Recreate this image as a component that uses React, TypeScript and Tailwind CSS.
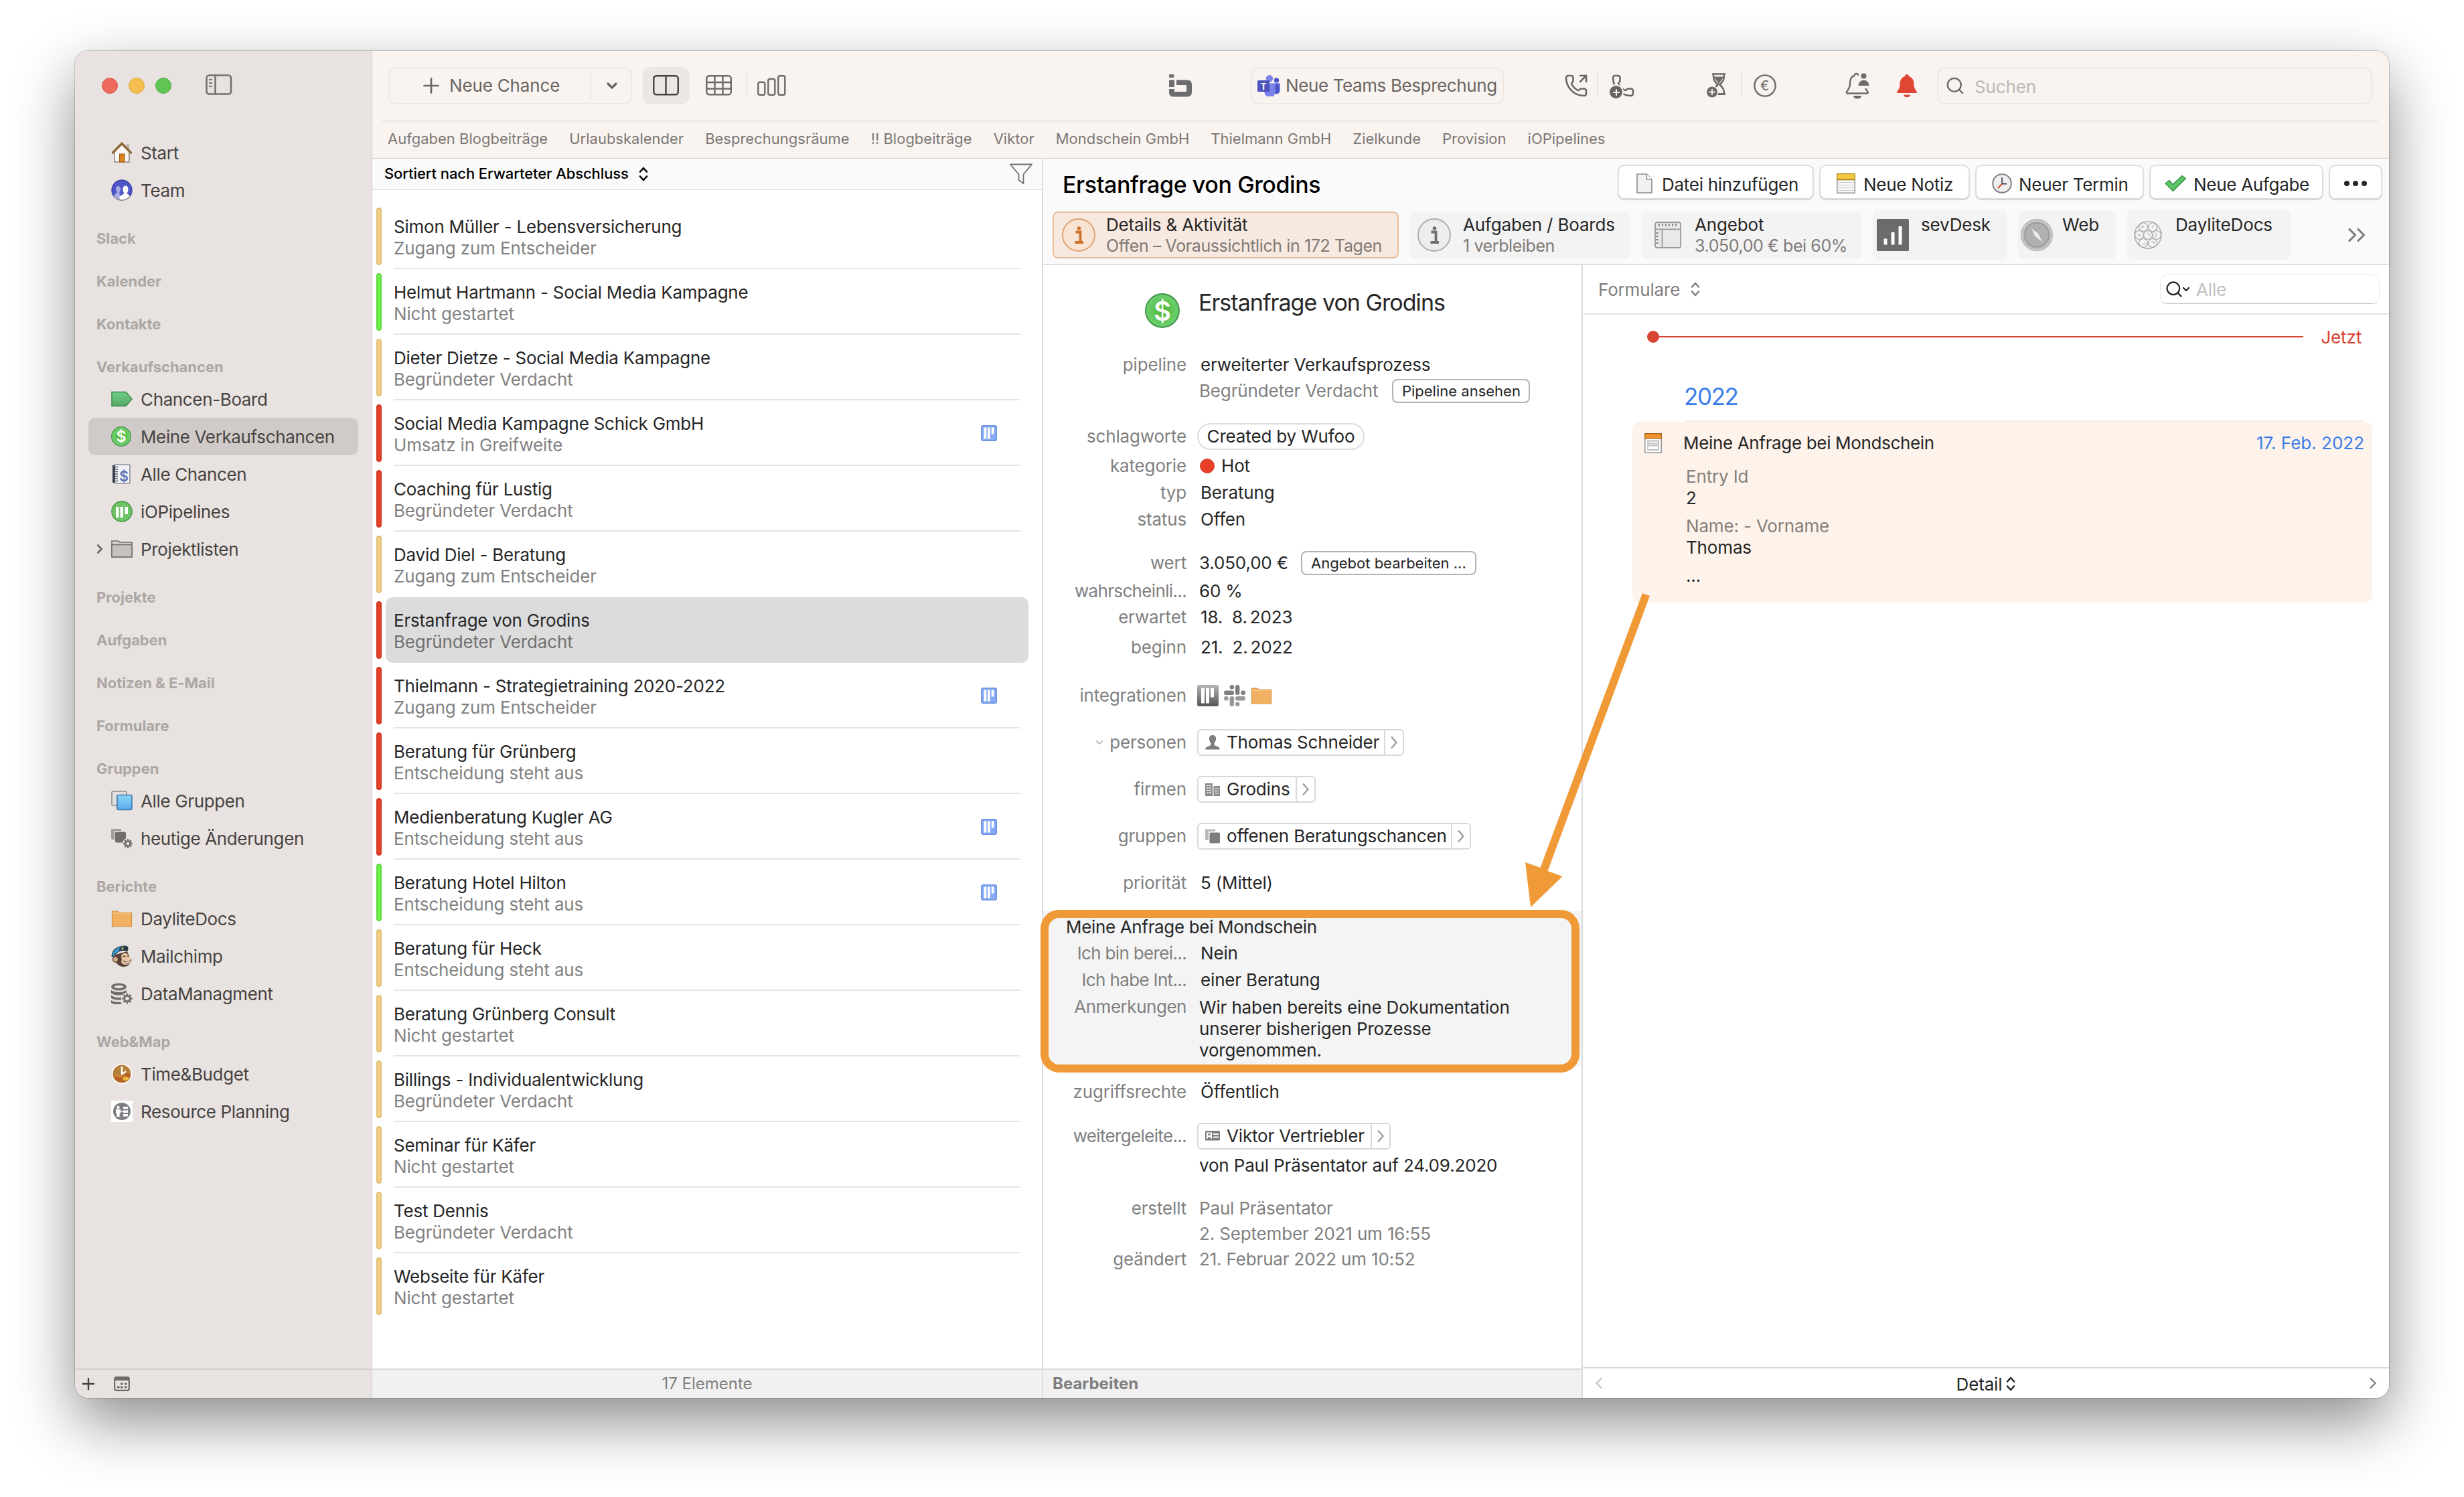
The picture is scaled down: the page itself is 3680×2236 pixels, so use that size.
import type { ReactNode } from "react";
import { ChevronDown, ChevronLeft, ChevronRight, Phone, PhoneOutgoing, Plus, Search } from "lucide-react";
import clsx from "clsx";

/* ---------- icons ---------- */

function HomeIcon() {
  return (
    <svg viewBox="0 0 32 32" className="size-8">
      <rect x="23" y="3" width="4" height="9" fill="#b9b4ad" />
      <path d="M5 14 L16 3 L27 14 V30 H5 Z" fill="#f7f6f4" stroke="#8b8780" strokeWidth="1.6" />
      <rect x="12.5" y="18" width="7.5" height="12" fill="#d9801f" stroke="#a45c12" />
      <path d="M2.5 16 L16 2.5 L29.5 16" fill="none" stroke="#8a6636" strokeWidth="3.4" strokeLinecap="round" />
    </svg>
  );
}

function TeamIcon() {
  return (
    <svg viewBox="0 0 32 32" className="size-8">
      <circle cx="16" cy="16" r="15" fill="#4f55c8" stroke="#3c40a5" strokeWidth="1.4" />
      <path d="M4 24 C5 21 9 22 8.6 18.5 C6 15 6.500 10 10.500 10 C14.500 10 15 15 12.600 18.500 C12 22 13 22 13 24 L13 30 C9 29.500 6 27 4 24 Z" fill="#a9abe4" />
      <path d="M12 27 C13 23 19 23.500 19 20 C16.500 16 17 9.500 21.500 9.500 C26 9.500 26.500 16 24 20 C24 22.500 26 22.500 28 24 C25 29 20 31.500 14 30.600 Z" fill="#fff" />
      <path d="M4 25 A15 15 0 0 0 28 25" fill="none" stroke="#9a9a9c" strokeWidth="1.6" />
    </svg>
  );
}

function TagIcon() {
  return (
    <svg viewBox="0 0 32 32" className="size-8">
      <defs>
        <linearGradient id="tag" x1="0" y1="0" x2="0" y2="1">
          <stop offset="0" stopColor="#6fce85" />
          <stop offset="1" stopColor="#55a867" />
        </linearGradient>
      </defs>
      <path d="M1 5.500 H22 L31 16 L22 26.500 H1 Z" fill="url(#tag)" stroke="#3f8a4d" strokeWidth="1.6" />
    </svg>
  );
}

function DollarIcon({ className = "size-[30px]" }: { className?: string }) {
  return (
    <svg viewBox="0 0 52 52" className={className}>
      <defs>
        <radialGradient id="dollar">
          <stop offset="0" stopColor="#4ab52c" />
          <stop offset="0.9" stopColor="#6bcf6e" />
          <stop offset="1" stopColor="#57b45c" />
        </radialGradient>
      </defs>
      <circle cx="26" cy="26" r="25" fill="url(#dollar)" stroke="#429148" strokeWidth="1.8" />
      <text x="26" y="40.500" textAnchor="middle" fontSize="40" fontWeight="600" fill="#fff" fontFamily="Inter">$</text>
    </svg>
  );
}

function LedgerIcon() {
  return (
    <svg viewBox="0 0 32 32" className="size-8 overflow-visible">
      <rect x="5" y="2" width="23" height="28" rx="1" fill="#f1f2f5" stroke="#8b8e97" strokeWidth="1.6" />
      <rect x="2" y="3" width="4" height="26" fill="#3a4050" />
      <path d="M6 5.500h4M6 9h4M6 12.500h4M6 16h4M6 19.500h4M6 23h4M6 26.500h4" stroke="#555a68" strokeWidth="1.500" />
      <text x="19" y="27" textAnchor="middle" fontSize="21" fontWeight="600" fill="#5872b5" fontFamily="Inter">$</text>
    </svg>
  );
}

function PipelinesIcon() {
  return (
    <svg viewBox="0 0 32 32" className="size-8">
      <circle cx="16" cy="16" r="15" fill="#6fc468" stroke="#57a052" strokeWidth="1.800" />
      <path d="M7 9h4.500v16H7zM13.500 9h4.500v16h-4.500zM20.500 9H25v11h-4.500z" fill="#fff" />
    </svg>
  );
}

function GrayFolderIcon() {
  return (
    <svg viewBox="0 0 32 32" className="size-8">
      <path d="M1 29 V5 H11 L13 7 H31 V29 Z" transform="translate(0 -1)" fill="#d6d1ce" stroke="#75706d" strokeWidth="1.600" />
      <rect x="1" y="9.500" width="30" height="18.500" fill="#c6c1be" stroke="#75706d" strokeWidth="1.600" />
    </svg>
  );
}

function GroupsIcon() {
  return (
    <svg viewBox="0 0 32 32" className="size-8">
      <defs>
        <linearGradient id="groups" x1="0" y1="0" x2="0" y2="1">
          <stop offset="0" stopColor="#8ad6f8" />
          <stop offset="1" stopColor="#5aa9ee" />
        </linearGradient>
      </defs>
      <rect x="1" y="2" width="22" height="21" rx="2" fill="#dfdfdf" stroke="#8d8b8a" strokeWidth="1.600" />
      <rect x="9" y="7.500" width="22" height="22" rx="2" fill="url(#groups)" stroke="#3c79a8" strokeWidth="1.600" />
    </svg>
  );
}

function Gear({ cx, cy, r, color, hole }: { cx: number; cy: number; r: number; color: string; hole: string }) {
  return (
    <g>
      {[0, 45, 90, 135].map((a) => (
        <rect key={a} x={cx - 1.4} y={cy - r - 2.2} width="2.8" height={2 * r + 4.4} fill={color} transform={`rotate(${a} ${cx} ${cy})`} />
      ))}
      <circle cx={cx} cy={cy} r={r} fill={color} />
      <circle cx={cx} cy={cy} r={r * 0.5} fill={hole} />
    </g>
  );
}

function SmartGroupIcon() {
  return (
    <svg viewBox="0 0 32 32" className="size-8">
      <path d="M0 2 h15 v3 H5 v13 H2 a2 2 0 0 1 -2 -2z" fill="#a29d9a" />
      <rect x="6" y="6.500" width="16" height="16" rx="2" fill="#736e6c" />
      <circle cx="25" cy="24" r="8" fill="#e8e3e0" />
      <Gear cx={25} cy={24} r={4.6} color="#736e6c" hole="#e8e3e0" />
    </svg>
  );
}

function OrangeFolderIcon({ className = "size-8" }: { className?: string }) {
  return (
    <svg viewBox="0 0 32 32" className={className}>
      <path d="M1.500 28 V5 H10 L12 7 H30.500 V28 Z" fill="#f2b062" stroke="#cf9347" strokeWidth="1.200" />
      <path d="M2 8 H30" stroke="#f8cd90" strokeWidth="1" />
    </svg>
  );
}

function MailchimpIcon() {
  return (
    <svg viewBox="0 0 32 32" className="size-8">
      <path d="M6 14 C5 25 9 31 18 32 C26 32 29 27 29 22 L24 9 Z" fill="#5a4138" />
      <circle cx="6.500" cy="21" r="4" fill="#d8b18d" stroke="#5a4138" strokeWidth="1.400" />
      <path d="M15 16 C17 10 25 11 26 16 C31 18 32 27 26 28 C18 31 13 26 16 22 Z" fill="#ecc9a4" />
      <path d="M18 23 C22 26 27 25 30 21 C30 27 21 30 18 23Z" fill="#fff" stroke="#4b352d" strokeWidth="0.900" />
      <path d="M17.500 16.500h4M24 16h2.500" stroke="#3b2a24" strokeWidth="1.300" />
      <path d="M1 16 C2 6 10 1 21 1 C25 1 26 5 24 8 C16 6 8 9 3 17 Z" fill="#3d9fd3" stroke="#22303c" strokeWidth="1.200" />
      <path d="M12 5 C16 1 24 1 25 3 L24 9 C21 6 16 6 12 8 Z" fill="#25323e" />
      <circle cx="17" cy="4.500" r="1.500" fill="#e7c84a" />
    </svg>
  );
}

function DatabaseIcon() {
  return (
    <svg viewBox="0 0 32 32" className="size-8">
      <g fill="#736e6c">
        <ellipse cx="11.500" cy="6" rx="11.500" ry="5.500" />
        <path d="M0 10.500 C4 15 19 15 23 10.500 V15.500 C18 19.500 4 19.500 0 15.500z" />
        <path d="M0 18.500 C4 22 11 22.500 15 21.500 V25.500 C10 26 4 25.500 0 23z" />
        <path d="M0 26 C4 29 10 29 14 28.500 L16 32 C8 32.500 3 32 0 30z" />
      </g>
      <ellipse cx="11.500" cy="6" rx="7" ry="2.200" fill="#e8e3e0" />
      <circle cx="24" cy="23.500" r="9" fill="#e8e3e0" />
      <Gear cx={24} cy={23.500} r={5.600} color="#736e6c" hole="#e8e3e0" />
    </svg>
  );
}

function TimeBudgetIcon() {
  return (
    <svg viewBox="0 0 32 32" className="size-8">
      <circle cx="16" cy="16" r="15.200" fill="#fff" />
      <circle cx="16" cy="16" r="13.500" fill="#b6813a" />
      <path d="M3 20 L9 17 L13 20 L20 15 L29 16 A13.500 13.500 0 0 1 4 22z" fill="#b85f22" />
      <path d="M3.500 21 L9 18 L13 21 L21 16" fill="none" stroke="#dca04a" strokeWidth="1.200" />
      <path d="M16 5 V16 L22 12.500" fill="none" stroke="#fff" strokeWidth="2.400" />
      <ellipse cx="22" cy="23" rx="5" ry="3.600" fill="#e8b53f" stroke="#a86a1d" />
    </svg>
  );
}

function ResourceIcon() {
  return (
    <svg viewBox="0 0 32 32" className="size-8">
      <rect width="32" height="32" fill="#fff" />
      <circle cx="16" cy="16" r="13" fill="#7d7f82" />
      <circle cx="10.500" cy="10" r="2.200" fill="#fff" />
      <path d="M7 13h7v6h-1.300v5H8.300v-5H7z" fill="#fff" />
      <path d="M18 9h7v3.500h-7zM18 14.500h7V18h-7zM18 20h7v3.500h-7z" fill="#fff" />
      <path d="M14 16h4" stroke="#fff" strokeWidth="1.200" />
    </svg>
  );
}

function TrelloIcon() {
  return (
    <svg viewBox="0 0 24 24" className="size-6">
      <rect x="0.700" y="0.700" width="22.600" height="22.600" rx="2.500" fill="#86aaf5" stroke="#6a8fdf" strokeWidth="1.400" />
      <path d="M4.500 3.500h3.800v17H4.500zM10 3.500h3.800v17H10zM15.800 3.500h3.800v10h-3.800z" fill="#fff" />
    </svg>
  );
}

function TrelloGrayIcon() {
  return (
    <svg viewBox="0 0 32 32" className="size-8">
      <defs>
        <linearGradient id="tg" x1="0" y1="0" x2="0" y2="1">
          <stop offset="0" stopColor="#b5b5b5" />
          <stop offset="1" stopColor="#555" />
        </linearGradient>
      </defs>
      <rect x="0" y="0" width="32" height="32" rx="3" fill="url(#tg)" />
      <path d="M6 4.500h5v23H6zM13 4.500h5v23h-5zM20 4.500h5v14h-5z" fill="#fff" />
    </svg>
  );
}

function SlackIcon() {
  return (
    <svg viewBox="0 0 32 32" className="size-8">
      <g fill="#7f7f7f">
        <rect x="8.500" y="0" width="6.600" height="6.600" rx="3" />
        <rect x="0" y="8.500" width="15" height="6.400" rx="3" />
        <rect x="17" y="0" width="6.400" height="15" rx="3" />
        <rect x="25.400" y="8.500" width="6.600" height="6.400" rx="3" />
      </g>
      <g fill="#999">
        <rect x="0" y="17" width="6.600" height="6.400" rx="3" />
        <rect x="8.500" y="17" width="6.600" height="15" rx="3" />
        <rect x="17" y="17" width="15" height="6.400" rx="3" />
        <rect x="17" y="25.400" width="6.400" height="6.600" rx="3" />
      </g>
    </svg>
  );
}

function SidebarToggleIcon() {
  return (
    <svg viewBox="0 0 40 32" className="w-10 h-8" fill="none" stroke="#75706d" strokeWidth="2.600">
      <rect x="1.500" y="1.500" width="36.500" height="28" rx="4" />
      <path d="M14.500 1.500v28" />
      <path d="M5 8h5M5 13h5M5 18h5" strokeWidth="1.800" />
    </svg>
  );
}

function SplitViewIcon() {
  return (
    <svg viewBox="0 0 40 32" className="w-10 h-8" fill="none" stroke="#46423f" strokeWidth="2.400">
      <rect x="1.300" y="1.300" width="36.500" height="28" rx="4" />
      <path d="M19.500 1.300v28" />
    </svg>
  );
}

function GridIcon() {
  return (
    <svg viewBox="0 0 40 32" className="w-10 h-8" fill="none" stroke="#6f6a67" strokeWidth="2.400">
      <rect x="1.300" y="1.300" width="36.500" height="28" rx="4" />
      <path d="M13.500 1.300v28M25.500 1.300v28M1.300 11h36.500M1.300 20.500h36.500" />
    </svg>
  );
}

function BarsIcon() {
  return (
    <svg viewBox="0 0 44 32" className="w-11 h-8" fill="none" stroke="#6f6a67" strokeWidth="2.400">
      <rect x="1.300" y="10.800" width="10" height="19" rx="2.500" />
      <rect x="16.300" y="6" width="10" height="23.800" rx="2.500" />
      <rect x="31.300" y="1.300" width="10" height="28.500" rx="2.500" />
    </svg>
  );
}

function BrandIcon() {
  return (
    <svg viewBox="0 0 36 34" className="w-9 h-[34px]">
      <rect x="1" y="0" width="7.500" height="5" fill="#75757a" />
      <path d="M1 8.500 H9 V19 H1Z M12 8.500 H28 Q35 8.500 35 15 V26.500 Q35 33.500 28 33.500 H8 Q1 33.500 1 27.500 V22 H9 V26 H27 V16 H12 Z" fill="#6b6b70" />
    </svg>
  );
}

function TeamsIcon() {
  return (
    <svg viewBox="0 0 34 32" className="w-[34px] h-8">
      <circle cx="28.500" cy="8" r="3.700" fill="#5059c9" />
      <path d="M24 12.500h9.500v11a5 5 0 0 1-9.500 2z" fill="#5059c9" />
      <circle cx="18" cy="5.200" r="5.200" fill="#7b83eb" />
      <path d="M10 12.500h16.500v12a7.500 7.500 0 0 1-16 2z" fill="#7b83eb" />
      <rect x="0" y="8" width="18" height="17" rx="1.500" fill="#4b53bc" />
      <text x="9" y="21.500" textAnchor="middle" fontSize="13" fontWeight="700" fill="#fff" fontFamily="Inter">T</text>
    </svg>
  );
}

function HourglassPlusIcon() {
  return (
    <svg viewBox="0 0 32 38" className="w-8 h-[38px]">
      <path d="M9 1.500h20M11 1.500c0 9 1.500 11 6.500 16-5 5-6.500 7-6.500 14h16c0-7-1.500-9-6.500-14 5-5 6.500-7 6.500-16" fill="none" stroke="#6f6a67" strokeWidth="2.600" />
      <path d="M11.500 5.500h15l-7.500 11z" fill="#6f6a67" />
      <path d="M10 31.500h19" stroke="#6f6a67" strokeWidth="2.600" />
      <circle cx="9" cy="28.500" r="9.500" fill="#f9f4f0" />
      <circle cx="9" cy="28.500" r="8" fill="#6f6a67" />
      <path d="M9 24v9M4.500 28.500h9" stroke="#f9f4f0" strokeWidth="1.800" />
    </svg>
  );
}

function EuroIcon() {
  return (
    <svg viewBox="0 0 36 36" className="size-9">
      <circle cx="18" cy="18" r="15.600" fill="none" stroke="#6f6a67" strokeWidth="2.400" />
      <text x="17.500" y="25" textAnchor="middle" fontSize="20" fill="#6f6a67" fontFamily="Inter">€</text>
    </svg>
  );
}

function BellPersonIcon() {
  return (
    <svg viewBox="0 0 36 40" className="w-9 h-10">
      <path d="M20 4.500 C18 1 14 1 13.500 5 C8 7 7 11 7 17 C7 24 4 26 1.800 29.500 Q1.500 31.500 4 31.500 H32 Q34.500 31.500 33.500 29 L30 24" fill="none" stroke="#6f6a67" strokeWidth="2.400" />
      <path d="M12 35 h12 a6 4.500 0 0 1 -12 0z" fill="#6f6a67" />
      <circle cx="27.500" cy="5.500" r="4" fill="#6f6a67" />
      <path d="M19.500 20 C20 9 35 9 35.500 20 Z" fill="#6f6a67" />
    </svg>
  );
}

function RedBellIcon() {
  return (
    <svg viewBox="0 0 32 34" className="w-8 h-[34px]">
      <path d="M16 0 C18 0 18.800 1.500 19 3 C24 4.500 26.500 9 26.500 15 C26.500 21 29 23.500 31 26 Q31.500 28 29.500 28 H2.500 Q0.500 28 1 26 C3 23.500 5.500 21 5.500 15 C5.500 9 8 4.500 13 3 C13.200 1.500 14 0 16 0Z" fill="#e14634" />
      <path d="M11 30.500h10a5 4 0 0 1-10 0z" fill="#e14634" />
    </svg>
  );
}

function UpDownIcon({ className }: { className?: string }) {
  return (
    <svg viewBox="0 0 14 22" className={clsx("w-3.5 h-[22px]", className)} fill="none" stroke="currentColor" strokeWidth="2.600" strokeLinecap="round" strokeLinejoin="round">
      <path d="M2 7.500 L7 2 L12 7.500M2 14.500 L7 20 L12 14.500" />
    </svg>
  );
}

function FunnelIcon() {
  return (
    <svg viewBox="0 0 34 32" className="w-[34px] h-8" fill="none" stroke="#707070" strokeWidth="1.800" strokeLinejoin="round">
      <path d="M1 1.500 H33 L20.500 16.500 V30 L13.500 25 V16.500 Z" />
    </svg>
  );
}

function FileIcon() {
  return (
    <svg viewBox="0 0 24 30" className="w-6 h-[30px]">
      <path d="M1 1 H15.500 L23 9 V29 H1 Z" fill="#f1f1f1" stroke="#8c8c8e" strokeWidth="1.600" />
      <path d="M15.500 1 V9 H23" fill="#fff" stroke="#8c8c8e" strokeWidth="1.400" />
    </svg>
  );
}

function NoteIcon() {
  return (
    <svg viewBox="0 0 28 30" className="w-7 h-[30px]">
      <rect x="0.800" y="0.800" width="26.400" height="28.400" fill="#fff" stroke="#98989a" strokeWidth="1.600" />
      <path d="M2 13.500h24M2 17.500h24M2 21.500h24M2 25.500h24" stroke="#cfcfcf" strokeWidth="1.500" />
      <rect x="0.600" y="0.600" width="26.800" height="9" fill="#f3c93f" stroke="#ab8421" strokeWidth="1.200" />
      <path d="M0.600 9.200h26.800" stroke="#b08a24" strokeWidth="2" />
    </svg>
  );
}

function ClockIcon() {
  return (
    <svg viewBox="0 0 30 30" className="size-[30px]">
      <circle cx="15" cy="15" r="13.800" fill="#efefef" stroke="#818183" strokeWidth="2" />
      <path d="M15 6v9.500h7" fill="none" stroke="#4a4e63" strokeWidth="1.800" />
      <path d="M15 15.500L9 22" stroke="#d6442d" strokeWidth="2" />
    </svg>
  );
}

function CheckIcon() {
  return (
    <svg viewBox="0 0 32 26" className="w-8 h-[26px]">
      <path d="M1 13 L7 8.500 L12 14.500 L26 1.500 L31.500 5.500 L12.500 24.500 Z" fill="#5ac466" stroke="#3d8f47" strokeWidth="1.300" strokeLinejoin="round" />
    </svg>
  );
}

function InfoIcon({ active }: { active?: boolean }) {
  return (
    <svg viewBox="0 0 50 50" className="size-[50px]">
      <circle cx="25" cy="25" r="24" fill={active ? "#f9e3d2" : "#ededed"} stroke={active ? "#dd9f6d" : "#ababab"} strokeWidth="1.800" />
      <circle cx="25.500" cy="15" r="2.800" fill={active ? "#cf7029" : "#6f6f6f"} />
      <path d="M20.500 20.500h7v15M19.500 36h12.500" fill="none" stroke={active ? "#cf7029" : "#6f6f6f"} strokeWidth="3.800" />
    </svg>
  );
}

function QuoteIcon() {
  return (
    <svg viewBox="0 0 40 40" className="size-10" fill="none" stroke="#9b9b9b" strokeWidth="1.800">
      <rect x="1" y="1" width="38" height="38" rx="3" fill="#e9e9e9" />
      <path d="M1 11.500h38M11.500 11.500v28" />
      <path d="M7 3v4M12 3v4M17 3v4M22 3v4M27 3v4M32 3v4M2 17h4M2 22h4M2 27h4M2 32h4" stroke="#6f6f6f" strokeWidth="1.600" />
    </svg>
  );
}

function SevDeskIcon() {
  return (
    <svg viewBox="0 0 48 48" className="size-12">
      <rect width="48" height="48" rx="1.500" fill="#6b6b6b" />
      <path d="M10.500 29.500h5v9h-5zM21.500 20h5v18.500h-5zM32.500 11h5v27.500h-5z" fill="#fff" />
    </svg>
  );
}

function CompassIcon() {
  return (
    <svg viewBox="0 0 50 50" className="size-[50px]">
      <circle cx="25" cy="25" r="24" fill="#b4b4b4" />
      <circle cx="25" cy="25" r="21.500" fill="none" stroke="#cfcfcf" strokeWidth="1.600" />
      <circle cx="25" cy="25" r="18" fill="#b0b0b0" stroke="#969696" strokeWidth="1.400" />
      <path d="M17 15 L27.500 23.500 L33 35 L22.500 27 Z" fill="#ededed" />
    </svg>
  );
}

function DocsIcon() {
  const cells = [[14, 9], [28, 9], [8, 21], [21, 21], [34, 21], [14, 33], [28, 33]];
  return (
    <svg viewBox="0 0 42 42" className="size-[42px]" fill="none" stroke="#a5a5a5">
      <circle cx="21" cy="21" r="20" fill="#f4f4f4" strokeWidth="1.400" />
      {cells.map(([x, y]) => (
        <circle key={`${x}-${y}`} cx={x} cy={y} r="6.500" strokeWidth="1.200" />
      ))}
      <path d="M11 7l2 4 2-4M27 11l3-5M6 19l2 4 2-4M18 33l-5 3M26 31h4v4M33 18v6M20 19h3v4" strokeWidth="1" />
    </svg>
  );
}

function FormIcon() {
  return (
    <svg viewBox="0 0 26 30" className="w-[26px] h-[30px]">
      <rect x="0.800" y="0.800" width="24.400" height="28.400" fill="#fff" stroke="#98989a" strokeWidth="1.600" />
      <rect x="0.600" y="0.600" width="24.800" height="7.400" fill="#ee9330" stroke="#a8641a" strokeWidth="1.200" />
      <path d="M5 11.500h16v4H5zM5 18.500h16v6.500H5z" fill="none" stroke="#c0c0c0" strokeWidth="1.800" />
    </svg>
  );
}

function MiniCalendarIcon() {
  return (
    <svg viewBox="0 0 24 22" className="w-6 h-[22px]">
      <rect x="1.200" y="1.200" width="21.600" height="19.600" rx="2.500" fill="none" stroke="#6f6a67" strokeWidth="2.200" />
      <path d="M1 1h22v5H1z" fill="#6f6a67" />
      <path d="M10 11h3.500M16 11h3.500M5 16h3.500M10 16h3.500M16 16h3.500" stroke="#6f6a67" strokeWidth="2.800" />
    </svg>
  );
}

function PersonIcon() {
  return (
    <svg viewBox="0 0 24 24" className="size-6" fill="#7d7d7d">
      <path d="M12 1c4 0 5.500 3 5 6.500-.4 3-1.500 4-2.500 5.500 0 4 2 4 5 5.200 2.500 1 3.300 2.500 3.300 4.300H1.200c0-1.800.8-3.300 3.300-4.300 3-1.200 5-1.200 5-5.200C8.500 11.500 7.400 10.500 7 7.500 6.500 4 8 1 12 1z" />
    </svg>
  );
}

function CompanyIcon() {
  return (
    <svg viewBox="0 0 24 24" className="size-6">
      <path d="M1 3h11v19H1zM13.500 7H23v15h-9.500z" fill="#8a8a8a" />
      <path d="M3.500 6.500h6M3.500 10h6M3.500 13.500h6M3.500 17h6M16 11h5M16 14.500h5M16 18h5" stroke="#fff" strokeWidth="1.400" strokeDasharray="2.400 1.200" />
    </svg>
  );
}

function StackIcon() {
  return (
    <svg viewBox="0 0 24 24" className="size-6">
      <path d="M1 1.500h15V5H6v13H3a2 2 0 0 1-2-2z" fill="#b9b9b9" />
      <rect x="7.500" y="6.500" width="15.500" height="16" rx="1.500" fill="#7d7d7d" />
    </svg>
  );
}

function CardIcon() {
  return (
    <svg viewBox="0 0 24 24" className="size-6">
      <rect x="1" y="4" width="22" height="14.500" rx="1.500" fill="#7d7d7d" />
      <rect x="3" y="6.500" width="8" height="9.500" fill="#fff" />
      <circle cx="7" cy="9.500" r="1.700" fill="#7d7d7d" />
      <path d="M4.500 16c0-4 5-4 5 0z" fill="#7d7d7d" />
      <path d="M13 9h8M13 13.500h8" stroke="#fff" strokeWidth="1.800" />
    </svg>
  );
}

/* ---------- data ---------- */

type NavItem = { title: string; icon: ReactNode; active?: boolean; expandable?: boolean };

const navSections: { heading?: string; items: NavItem[] }[] = [
  {
    items: [
      { title: "Start", icon: <HomeIcon /> },
      { title: "Team", icon: <TeamIcon /> },
    ],
  },
  { heading: "Slack", items: [] },
  { heading: "Kalender", items: [] },
  { heading: "Kontakte", items: [] },
  {
    heading: "Verkaufschancen",
    items: [
      { title: "Chancen-Board", icon: <TagIcon /> },
      { title: "Meine Verkaufschancen", icon: <DollarIcon />, active: true },
      { title: "Alle Chancen", icon: <LedgerIcon /> },
      { title: "iOPipelines", icon: <PipelinesIcon /> },
      { title: "Projektlisten", icon: <GrayFolderIcon />, expandable: true },
    ],
  },
  { heading: "Projekte", items: [] },
  { heading: "Aufgaben", items: [] },
  { heading: "Notizen & E-Mail", items: [] },
  { heading: "Formulare", items: [] },
  {
    heading: "Gruppen",
    items: [
      { title: "Alle Gruppen", icon: <GroupsIcon /> },
      { title: "heutige Änderungen", icon: <SmartGroupIcon /> },
    ],
  },
  {
    heading: "Berichte",
    items: [
      { title: "DayliteDocs", icon: <OrangeFolderIcon /> },
      { title: "Mailchimp", icon: <MailchimpIcon /> },
      { title: "DataManagment", icon: <DatabaseIcon /> },
    ],
  },
  {
    heading: "Web&Map",
    items: [
      { title: "Time&Budget", icon: <TimeBudgetIcon /> },
      { title: "Resource Planning", icon: <ResourceIcon /> },
    ],
  },
];

const bookmarks = [
  "Aufgaben Blogbeiträge",
  "Urlaubskalender",
  "Besprechungsräume",
  "!! Blogbeiträge",
  "Viktor",
  "Mondschein GmbH",
  "Thielmann GmbH",
  "Zielkunde",
  "Provision",
  "iOPipelines",
];

const barColors = {
  yellow: "bg-[#f7d284] border-[#dfc078]",
  green: "bg-[#6ff548] border-[#62d843]",
  red: "bg-[#ea4025] border-[#d03c26]",
};

type Deal = { title: string; stage: string; color: keyof typeof barColors; board?: boolean; active?: boolean };

const deals: Deal[] = [
  { title: "Simon Müller - Lebensversicherung", stage: "Zugang zum Entscheider", color: "yellow" },
  { title: "Helmut Hartmann - Social Media Kampagne", stage: "Nicht gestartet", color: "green" },
  { title: "Dieter Dietze - Social Media Kampagne", stage: "Begründeter Verdacht", color: "yellow" },
  { title: "Social Media Kampagne Schick GmbH", stage: "Umsatz in Greifweite", color: "red", board: true },
  { title: "Coaching für Lustig", stage: "Begründeter Verdacht", color: "red" },
  { title: "David Diel - Beratung", stage: "Zugang zum Entscheider", color: "yellow" },
  { title: "Erstanfrage von Grodins", stage: "Begründeter Verdacht", color: "red", active: true },
  { title: "Thielmann - Strategietraining 2020-2022", stage: "Zugang zum Entscheider", color: "red", board: true },
  { title: "Beratung für Grünberg", stage: "Entscheidung steht aus", color: "red" },
  { title: "Medienberatung Kugler AG", stage: "Entscheidung steht aus", color: "red", board: true },
  { title: "Beratung Hotel Hilton", stage: "Entscheidung steht aus", color: "green", board: true },
  { title: "Beratung für Heck", stage: "Entscheidung steht aus", color: "yellow" },
  { title: "Beratung Grünberg Consult", stage: "Nicht gestartet", color: "yellow" },
  { title: "Billings - Individualentwicklung", stage: "Begründeter Verdacht", color: "yellow" },
  { title: "Seminar für Käfer", stage: "Nicht gestartet", color: "yellow" },
  { title: "Test Dennis", stage: "Begründeter Verdacht", color: "yellow" },
  { title: "Webseite für Käfer", stage: "Nicht gestartet", color: "yellow" },
];

/* ---------- sidebar ---------- */

function Sidebar() {
  return (
    <aside className="flex w-[444px] shrink-0 flex-col border-r border-[#d3cecb] bg-[#e8e3e0]">
      <div className="flex h-[124px] items-start pl-10 pt-9">
        <div className="mt-1 flex gap-4">
          <span className="size-6 rounded-full border border-[#d65a50] bg-[#ed6a5e]" />
          <span className="size-6 rounded-full border border-[#dba843] bg-[#f5bf4f]" />
          <span className="size-6 rounded-full border border-[#53ac45] bg-[#61c554]" />
        </div>
        <div className="-mt-px ml-[51px]">
          <SidebarToggleIcon />
        </div>
      </div>

      <nav className="flex flex-1 flex-col gap-6">
        {navSections.map((section, i) => (
          <div key={i}>
            {section.heading && (
              <h2 className="flex h-10 items-center pl-8 text-[22px] font-bold tracking-[-0.002em] text-[#aca7a4]">
                {section.heading}
              </h2>
            )}
            {section.items.map((item) => (
              <div
                key={item.title}
                className={clsx(
                  "mx-5 flex h-14 items-center rounded-[10px] text-[26px] tracking-[-0.014em] text-[#474341]",
                  item.active && "bg-[#d0cbc8]",
                )}
              >
                <span className="flex w-[34px] items-center pl-2.5">
                  {item.expandable && <ChevronRight className="size-[22px] -ml-1 text-[#6f6a67]" strokeWidth={3} />}
                </span>
                <span className="flex w-11 items-center">{item.icon}</span>
                <span>{item.title}</span>
              </div>
            ))}
          </div>
        ))}
      </nav>

      <div className="flex h-11 items-center border-t-2 border-[#d4cfcc]">
        <Plus className="ml-1.5 size-7 text-[#46423f]" strokeWidth={2} />
        <div className="ml-6">
          <MiniCalendarIcon />
        </div>
      </div>
    </aside>
  );
}

/* ---------- toolbar ---------- */

function ToolDivider() {
  return <span className="h-10 w-0.5 shrink-0 bg-[#ebe6e2]" />;
}

function Toolbar() {
  return (
    <header className="h-[161px] border-b border-[#d5d1ce] bg-[#f9f4f0] text-[#6a6562]">
      <div className="flex h-[104px] items-center pl-6 pr-6">
        <div className="flex h-14 w-[364px] items-center rounded-xl border-2 border-[#eee9e5]">
          <Plus className="ml-[44px] size-9" strokeWidth={1.8} />
          <span className="-mt-0.5 ml-[9px] w-[210px] text-[26px]">Neue Chance</span>
          <ToolDivider />
          <ChevronDown className="ml-[19px] size-6" strokeWidth={3.4} />
        </div>
        <div className="ml-4 flex h-14 w-[70px] items-center justify-center rounded-xl bg-[#ece7e3]">
          <SplitViewIcon />
        </div>
        <div className="ml-6 flex items-center">
          <GridIcon />
          <span className="ml-5" />
          <ToolDivider />
          <span className="ml-[15px]" />
          <BarsIcon />
        </div>
        <div className="ml-[570px]">
          <BrandIcon />
        </div>
        <div className="ml-[87px] flex h-14 w-[378px] items-center rounded-xl border-2 border-[#eee9e5] pl-2">
          <TeamsIcon />
          <span className="-mt-0.5 ml-2 whitespace-nowrap text-[26px] tracking-[-0.015em]">Neue Teams Besprechung</span>
        </div>
        <div className="ml-[90px] flex items-center">
          <PhoneOutgoing className="size-9" strokeWidth={1.7} />
          <span className="ml-[13px]" />
          <ToolDivider />
          <span className="relative ml-[19px] size-9">
            <Phone className="size-9" strokeWidth={1.7} />
            <span className="absolute -left-0.5 top-[18px] flex size-[19px] items-center justify-center rounded-full bg-[#6a6562] ring-2 ring-[#f9f4f0]">
              <Plus className="size-3.5 text-[#f9f4f0]" strokeWidth={3.4} />
            </span>
          </span>
        </div>
        <div className="ml-[106px] flex items-center">
          <HourglassPlusIcon />
          <span className="ml-5" />
          <ToolDivider />
          <span className="ml-4" />
          <EuroIcon />
        </div>
        <div className="ml-[102px] flex items-center gap-10">
          <BellPersonIcon />
          <RedBellIcon />
        </div>
        <div className="ml-[29px] flex h-14 w-[650px] items-center rounded-xl border-2 border-[#eee9e5] pl-2.5">
          <Search className="size-[30px]" strokeWidth={1.8} />
          <span className="ml-3.5 mt-0.5 text-[26px] text-[#bdb8b5]">Suchen</span>
        </div>
      </div>
      <div className="ml-3.5 mr-4 flex h-[56px] items-center gap-8 border-t-2 border-[#ede8e4] pb-1 pl-[9px] text-[22px] tracking-normal text-[#7c7774]">
        {bookmarks.map((b) => (
          <span key={b} className="whitespace-nowrap">{b}</span>
        ))}
      </div>
    </header>
  );
}

/* ---------- deal list ---------- */

function DealList() {
  return (
    <section className="flex w-[1002px] shrink-0 flex-col border-r-2 border-[#dcdcdc] bg-white">
      <div className="flex h-[47px] items-center border-b-2 border-[#e3e3e3] bg-[#fafafa] pl-[18px] pr-3.5 text-black">
        <span className="text-[22px] font-medium tracking-[-0.004em]">Sortiert nach Erwarteter Abschluss</span>
        <UpDownIcon className="ml-[15px]" />
        <span className="ml-auto">
          <FunnelIcon />
        </span>
      </div>
      <ul className="flex-1 pt-5">
        {deals.map((deal, i) => {
          const beforeActive = deals[i + 1]?.active;
          const last = i === deals.length - 1;
          return (
            <li key={deal.title} className="flex h-[98px] pl-1.5 pr-5">
              <span className={clsx("mt-1.5 h-[86px] w-2 rounded-full border-2", barColors[deal.color])} />
              <div className={clsx("ml-1.5 flex flex-1 rounded-[10px] pl-3 pr-3", deal.active && "bg-[#dcdcdc]")}>
                <div
                  className={clsx(
                    "flex flex-1 items-center border-b-2 pr-[35px] text-[26px] leading-8",
                    deal.active || beforeActive || last ? "border-transparent" : "border-[#e5e5e5]",
                  )}
                >
                  <div className="pt-1.5">
                    <p className="tracking-[-0.009em] text-[#262626]">{deal.title}</p>
                    <p className={clsx("tracking-[-0.006em]", deal.active ? "text-[#717171]" : "text-[#828282]")}>{deal.stage}</p>
                  </div>
                  {deal.board && (
                    <span className="ml-auto pt-0.5">
                      <TrelloIcon />
                    </span>
                  )}
                </div>
              </div>
            </li>
          );
        })}
      </ul>
      <div className="flex h-11 items-center justify-center border-t-2 border-[#dadada] bg-[#f1f1f1] text-2xl tracking-normal text-[#7f7f7f]">
        17 Elemente
      </div>
    </section>
  );
}

/* ---------- detail header ---------- */

function ActionButton({ className, children }: { className: string; children: ReactNode }) {
  return (
    <button
      type="button"
      className={clsx(
        "flex h-[52px] items-center rounded-[10px] border-2 border-[#dedede] bg-white pt-1 text-[26px] tracking-[-0.011em] whitespace-nowrap text-[#262626] shadow-[0_1px_1px_#c9c9c9]",
        className,
      )}
    >
      {children}
    </button>
  );
}

function DetailHeader() {
  return (
    <div className="h-[159px] border-b-2 border-[#dfdfdf] bg-[#fafafa]">
      <div className="flex h-[79px] items-start pl-[29px] pr-2.5 pt-[9px]">
        <h1 className="mt-[9px] text-[34px] leading-[42px] font-medium tracking-[-0.012em] text-black">Erstanfrage von Grodins</h1>
        <div className="ml-auto flex gap-2">
          <ActionButton className="w-[293px] pl-[26px]">
            <FileIcon />
            <span className="ml-3.5 mt-0.5">Datei hinzufügen</span>
          </ActionButton>
          <ActionButton className="w-[225px] pl-6">
            <NoteIcon />
            <span className="ml-3 mt-0.5">Neue Notiz</span>
          </ActionButton>
          <ActionButton className="w-[252px] pl-[23px]">
            <ClockIcon />
            <span className="ml-2.5 mt-0.5">Neuer Termin</span>
          </ActionButton>
          <ActionButton className="w-[260px] pl-[21px]">
            <CheckIcon />
            <span className="ml-[11px] mt-0.5">Neue Aufgabe</span>
          </ActionButton>
          <ActionButton className="w-[80px] justify-center gap-[5px]">
            <span className="size-2 rounded-full bg-[#262626]" />
            <span className="size-2 rounded-full bg-[#262626]" />
            <span className="size-2 rounded-full bg-[#262626]" />
          </ActionButton>
        </div>
      </div>

      <div className="flex h-[70px] items-center pl-3.5 text-[#262626]">
        <div className="flex h-[70px] w-[517px] items-center rounded-lg border-2 border-[#e9bd9b] bg-[#f7e9df] pl-3">
          <InfoIcon active />
          <TabText title="Details & Aktivität" sub="Offen – Voraussichtlich in 172 Tagen" className="ml-4" />
        </div>
        <div className="ml-4 flex h-[70px] w-[330px] items-center rounded-lg bg-[#f3f3f3] pl-3">
          <InfoIcon />
          <TabText title="Aufgaben / Boards" sub="1 verbleiben" className="ml-[18px]" />
        </div>
        <div className="ml-4 flex h-[70px] w-[330px] items-center rounded-lg bg-[#f3f3f3] pl-5">
          <QuoteIcon />
          <TabText title="Angebot" sub="3.050,00 € bei 60%" className="ml-5" />
        </div>
        <div className="ml-4 flex h-[74px] w-[201px] items-center rounded-lg bg-[#f3f3f3] pl-1.5">
          <SevDeskIcon />
          <TabText title="sevDesk" className="ml-[18px]" />
        </div>
        <div className="ml-4 flex h-[72px] w-[147px] items-center rounded-lg bg-[#f3f3f3] pl-[3px]">
          <CompassIcon />
          <TabText title="Web" className="ml-[13px]" />
        </div>
        <div className="ml-4 flex h-[74px] w-[244px] items-center rounded-lg bg-[#f3f3f3] pl-2.5">
          <DocsIcon />
          <TabText title="DayliteDocs" className="ml-5" />
        </div>
        <svg viewBox="0 0 28 22" className="ml-[85px] w-7 h-[22px]" fill="none" stroke="#7d7d7d" strokeWidth="3">
          <path d="M2 1.500 L11.500 11 L2 20.500M15 1.500 L24.500 11 L15 20.500" />
        </svg>
      </div>
    </div>
  );
}

function TabText({ title, sub, className }: { title: string; sub?: string; className?: string }) {
  return (
    <div className={clsx("whitespace-nowrap", className)}>
      <p className="text-[26px] leading-[31px]">{title}</p>
      <p className="h-[31px] text-[25px] leading-[33px] tracking-[-0.016em] text-[#7f7a77]">{sub}</p>
    </div>
  );
}

/* ---------- detail fields ---------- */

function Field({ label, className, children }: { label?: ReactNode; className?: string; children?: ReactNode }) {
  return (
    <div className={clsx("flex items-start text-[26px] leading-8 whitespace-nowrap", className)}>
      <span className="flex h-8 w-[214px] shrink-0 items-center justify-end pt-0.5 text-[#808080]">{label}</span>
      <div className="ml-[19px] flex h-8 items-center pt-0.5 text-[#262626]">{children}</div>
    </div>
  );
}

function SmallButton({ className, children }: { className: string; children: ReactNode }) {
  return (
    <button
      type="button"
      className={clsx("flex h-9 items-center justify-center rounded-lg border-2 border-[#b3b3b3] bg-white text-[22px] tracking-normal", className)}
    >
      {children}
    </button>
  );
}

function Token({ icon, className, children }: { icon: ReactNode; className: string; children: ReactNode }) {
  return (
    <span className={clsx("-mt-px -ml-[3px] flex h-10 items-center rounded-md border-2 border-[#d9d9d9] bg-white", className)}>
      <span className="ml-[9px]">{icon}</span>
      <span className="ml-[9px] flex-1 pt-px">{children}</span>
      <span className="flex h-full w-7 items-center justify-center border-l-2 border-[#d9d9d9]">
        <svg viewBox="0 0 12 20" className="w-3 h-5" fill="none" stroke="#999" strokeWidth="2.200">
          <path d="M2 1.500 L9.500 10 L2 18.500" />
        </svg>
      </span>
    </span>
  );
}

function DetailFields() {
  return (
    <section className="relative flex w-[806px] shrink-0 flex-col border-r-2 border-[#dcdcdc] bg-white">
      <div className="flex-1">
        <div className="flex h-[132px] items-start pl-[152px] pt-[42px]">
          <DollarIcon className="size-[52px]" />
          <h2 className="ml-[28px] -mt-[6px] text-[34px] leading-[40px] tracking-[-0.028em] text-[#262626]">Erstanfrage von Grodins</h2>
        </div>

        <Field label="pipeline">
          <span className="pl-0.5">erweiterter Verkaufsprozess</span>
        </Field>
        <Field className="mt-[7px]">
          <span className="text-[#808080]">Begründeter Verdacht</span>
          <SmallButton className="ml-[21px] w-[206px]">Pipeline ansehen</SmallButton>
        </Field>
        <Field label="schlagworte" className="mt-9">
          <span className="-ml-[3px] flex h-10 w-[250px] items-center justify-center rounded-full border-2 border-[#dcdcdc]">Created by Wufoo</span>
        </Field>
        <Field label="kategorie" className="mt-3">
          <span className="ml-px size-[22px] rounded-full border border-[#c93a24] bg-[#e93f26]" />
          <span className="ml-2.5">Hot</span>
        </Field>
        <Field label="typ" className="mt-2">
          <span className="pl-0.5">Beratung</span>
        </Field>
        <Field label="status" className="mt-2">
          <span className="pl-0.5">Offen</span>
        </Field>
        <Field label="wert" className="mt-[33px]">
          <span>3.050,00 €</span>
          <SmallButton className="ml-[19px] w-[262px]">Angebot bearbeiten ...</SmallButton>
        </Field>
        <Field label={<span className="tracking-[-0.025em]">wahrscheinli...</span>} className="mt-2.5">60 %</Field>
        <Field label="erwartet" className="mt-[7px]">
          <span className="ml-0.5">18.</span>
          <span className="ml-3.5">8.</span>
          <span className="ml-1">2023</span>
        </Field>
        <Field label="beginn" className="mt-[13px]">
          <span className="ml-0.5">21.</span>
          <span className="ml-3.5">2.</span>
          <span className="ml-1">2022</span>
        </Field>
        <Field label="integrationen" className="mt-10">
          <span className="-ml-[3px] flex items-center gap-2">
            <TrelloGrayIcon />
            <SlackIcon />
            <OrangeFolderIcon />
          </span>
        </Field>
        <Field
          label={
            <>
              <ChevronDown className="mr-1.5 size-[18px] text-[#b0b0b0]" strokeWidth={2.2} />
              personen
            </>
          }
          className="mt-[38px]"
        >
          <Token icon={<PersonIcon />} className="w-[309px]">Thomas Schneider</Token>
        </Field>
        <Field label="firmen" className="mt-[38px]">
          <Token icon={<CompanyIcon />} className="w-[177px]">Grodins</Token>
        </Field>
        <Field label="gruppen" className="mt-[38px]">
          <Token icon={<StackIcon />} className="w-[409px]">offenen Beratungschancen</Token>
        </Field>
        <Field label="priorität" className="mt-[38px]">
          <span className="pl-0.5">5 (Mittel)</span>
        </Field>

        <div className="mt-[27px] h-[232px] bg-[#f4f4f4] pt-[7px]">
          <p className="pl-[34px] pt-px text-[26px] leading-8 tracking-[-0.013em] text-[#262626]">Meine Anfrage bei Mondschein</p>
          <Field label={<span className="tracking-[-0.025em]">Ich bin berei...</span>} className="mt-1.5">
            <span className="pl-0.5">Nein</span>
          </Field>
          <Field label={<span className="tracking-[-0.025em]">Ich habe Int...</span>} className="mt-2">
            <span className="pl-0.5">einer Beratung</span>
          </Field>
          <Field label={<span className="tracking-[-0.018em]">Anmerkungen</span>} className="mt-2">
            <p className="w-[480px] self-start whitespace-normal">Wir haben bereits eine Dokumentation unserer bisherigen Prozesse vorgenommen.</p>
          </Field>
        </div>

        <Field label="zugriffsrechte" className="mt-[21px]">
          <span className="pl-0.5">Öffentlich</span>
        </Field>
        <Field label={<span className="tracking-[-0.025em]">weitergeleite...</span>} className="mt-[34px]">
          <Token icon={<CardIcon />} className="w-[289px]">Viktor Vertriebler</Token>
        </Field>
        <Field className="mt-3">von Paul Präsentator auf 24.09.2020</Field>
        <Field label="erstellt" className="mt-8">
          <span className="text-[#808080]">Paul Präsentator</span>
        </Field>
        <Field className="mt-1.5">
          <span className="text-[#808080]">2. September 2021 um 16:55</span>
        </Field>
        <Field label="geändert" className="mt-1.5">
          <span className="text-[#808080]">21. Februar 2022 um 10:52</span>
        </Field>
      </div>

      <div className="flex h-11 items-center border-t-2 border-[#dadada] bg-[#f1f1f1] pl-3.5 text-2xl font-bold tracking-normal text-[#7f7f7f]">
        Bearbeiten
      </div>

      {/* highlight frame and arrow drawn over the form section */}
      <div className="pointer-events-none absolute -left-1 top-[963px] h-[243px] w-[805px] rounded-[28px] border-[12px] border-[#f09a37]" />
      <svg viewBox="0 0 200 480" className="pointer-events-none absolute left-[712px] top-[484px] z-10 h-[480px] w-[200px]" fill="#f09a37">
        <path d="M183 6 L194 10 L41.500 421 L63.500 429 L16 475 L8 408 L30.500 416 Z" />
      </svg>
    </section>
  );
}

/* ---------- activity ---------- */

function Activity() {
  return (
    <section className="flex min-w-0 flex-1 flex-col bg-white">
      <div className="flex h-[74px] items-center border-b-2 border-[#e5e5e5] pl-[23px] pr-3.5 text-[26px]">
        <span className="text-[#808080]">Formulare</span>
        <UpDownIcon className="ml-4 text-[#808080]" />
        <div className="ml-auto flex h-11 w-[328px] items-center rounded-[10px] border border-[#ebebeb] border-b-[#c4c4c4] pl-1.5">
          <Search className="size-7 text-[#262626]" strokeWidth={2} />
          <ChevronDown className="-ml-1 size-4 text-[#262626]" strokeWidth={3.5} />
          <span className="ml-[7px] text-[#c0c0c0]">Alle</span>
        </div>
      </div>

      <div className="flex-1">
        <div className="mt-[17px] flex h-8 items-center pl-24 pr-[41px]">
          <span className="size-[18px] rounded-full bg-[#d74534]" />
          <span className="h-0.5 flex-1 bg-[#d74534]" />
          <span className="ml-[26px] text-[26px] text-[#d74534]">Jetzt</span>
        </div>
        <h3 className="mt-[52px] pl-[151px] text-[35px] leading-[42px] tracking-[-0.04em] text-[#3b7de8]">2022</h3>
        <div className="ml-[152px] mr-[38px] mt-[15px] h-0.5 bg-[#ececec]" />

        <div className="ml-[74px] mr-[25px] h-[270px] rounded-xl bg-[#fdf3eb] pt-4 text-[26px] leading-8 text-[#262626]">
          <div className="flex items-center pl-[18px] pr-3">
            <FormIcon />
            <span className="ml-8 tracking-[-0.013em]">Meine Anfrage bei Mondschein</span>
            <span className="ml-auto tracking-normal text-[#3b7de8]">17. Feb. 2022</span>
          </div>
          <div className="pl-20">
            <p className="mt-[18px] text-[#857f7a]">Entry Id</p>
            <p>2</p>
            <p className="mt-2.5 text-[#857f7a]">Name: - Vorname</p>
            <p>Thomas</p>
            <p className="mt-2.5">...</p>
          </div>
        </div>
      </div>

      <div className="flex h-[46px] items-center border-t-2 border-[#d8d8d8] px-4 text-[26px] text-[#262626]">
        <ChevronLeft className="-ml-1.5 size-7 text-[#bdbdbd]" strokeWidth={1.6} />
        <span className="flex flex-1 items-center justify-center gap-1.5 pt-0.5">
          Detail
          <UpDownIcon />
        </span>
        <ChevronRight className="-mr-1.5 size-7 text-[#6f6f6f]" strokeWidth={1.6} />
      </div>
    </section>
  );
}

export default function App() {
  return (
    <div className="h-[2236px] w-[3680px] overflow-hidden bg-white px-28 pt-[76px] font-['Inter',sans-serif] tracking-[-0.01em]">
      <div className="flex h-[2012px] overflow-hidden rounded-[20px] shadow-[0_0_2px_rgba(0,0,0,0.6),0_36px_90px_rgba(0,0,0,0.45)]">
        <Sidebar />
        <div className="flex min-w-0 flex-1 flex-col">
          <Toolbar />
          <div className="flex min-h-0 flex-1">
            <DealList />
            <div className="flex min-w-0 flex-1 flex-col">
              <DetailHeader />
              <div className="flex min-h-0 flex-1">
                <DetailFields />
                <Activity />
              </div>
            </div>
          </div>
        </div>
      </div>
    </div>
  );
}
